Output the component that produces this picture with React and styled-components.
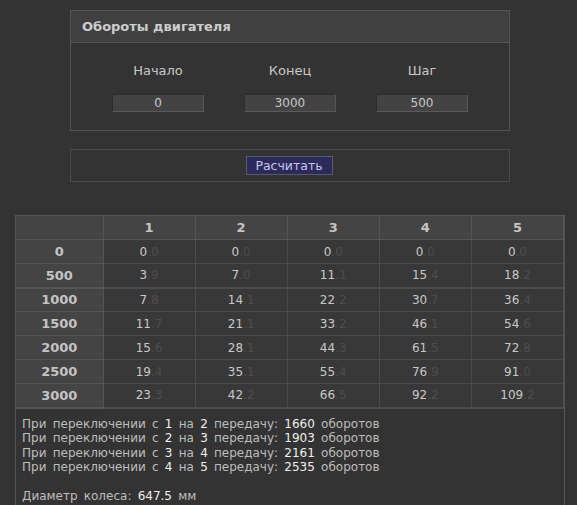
import React from "react";
import styled, { createGlobalStyle } from "styled-components";

const Global = createGlobalStyle`
  html, body { margin: 0; padding: 0; background: #333333; }
  body { font-family: "DejaVu Sans", Verdana, sans-serif; color: #c8c8c8; }
`;

const Page = styled.div`
  padding-top: 10px;
  min-height: 505px;
  box-sizing: border-box;
`;

const Panel = styled.div`
  margin-left: 70px;
  width: 440px;
  border: 1px solid #555;
  box-sizing: border-box;
`;

const PanelHeader = styled.div`
  height: 31px;
  line-height: 31px;
  background: #404040;
  border-bottom: 1px solid #555;
  padding-left: 11px;
  font-weight: bold;
  font-size: 13px;
  color: #cdcdcd;
`;

const PanelBody = styled.div`
  display: grid;
  grid-template-columns: repeat(3, 132px);
  justify-content: center;
  padding: 20px 0 18px;
`;

const Field = styled.div`
  display: flex;
  flex-direction: column;
  align-items: center;
  gap: 15px;
`;

const Label = styled.div`
  font-size: 13px;
  line-height: 16px;
  color: #c8c8c8;
`;

const Input = styled.div`
  width: 92px;
  height: 18px;
  box-sizing: border-box;
  background: #434343;
  border: 1px solid #2c2c2c;
  border-bottom-color: #5a5a5a;
  border-right-color: #555;
  text-align: center;
  font-size: 12px;
  line-height: 16px;
  color: #c8c8c8;
`;

const ButtonPanel = styled.div`
  margin: 18px 0 0 70px;
  width: 440px;
  height: 33px;
  border: 1px solid #4a4a4a;
  box-sizing: border-box;
  display: flex;
  align-items: center;
  justify-content: center;
`;

const Button = styled.div`
  width: 87px;
  height: 19px;
  box-sizing: border-box;
  background: #2d2a5c;
  border: 1px solid #5a5a6a;
  color: #c9c6ee;
  font-size: 12.5px;
  line-height: 17px;
  text-align: center;
  margin-left: -2px;
`;

const Results = styled.div`
  margin: 33px 0 0 15px;
  width: 550px;
  border-left: 1px solid #555;
  border-right: 1px solid #555;
  box-sizing: border-box;
`;

const Table = styled.table`
  width: 100%;
  border-collapse: collapse;
  table-layout: fixed;
`;

const Th = styled.th`
  height: 24px;
  padding: 0;
  background: #444;
  border: 1px solid #555;
  border-left: ${(p) => (p.$first ? "none" : "1px solid #555")};
  font-size: 13px;
  font-weight: bold;
  color: #c4c4c4;
  text-align: center;
  box-sizing: border-box;
`;

const Td = styled.td`
  height: 24px;
  padding: 0;
  background: #383838;
  border: 1px solid #4a4a4a;
  border-bottom: ${(p) => (p.$thick ? "2px solid #4c4c4c" : "1px solid #4a4a4a")};
  font-size: 12px;
  color: #c8c8c8;
  text-align: center;
  box-sizing: border-box;
`;

const RowHead = styled(Th)`
  border-left: none;
  border-bottom: ${(p) => (p.$thick ? "2px solid #555" : "1px solid #555")};
`;

const Dim = styled.span`
  color: #4d4d4d;
`;

const Notes = styled.div`
  padding: 8px 6px 4px;
  font-size: 12px;
  line-height: 14.5px;
  word-spacing: 2.4px;
  color: #bdbdbd;
`;

const Hi = styled.span`
  color: #f0f0f0;
`;

const Spacer = styled.div`
  height: 14.5px;
`;

const starts = [0, 500, 1000, 1500, 2000, 2500, 3000];
const data = [
  ["0.0", "0.0", "0.0", "0.0", "0.0"],
  ["3.9", "7.0", "11.1", "15.4", "18.2"],
  ["7.8", "14.1", "22.2", "30.7", "36.4"],
  ["11.7", "21.1", "33.2", "46.1", "54.6"],
  ["15.6", "28.1", "44.3", "61.5", "72.8"],
  ["19.4", "35.1", "55.4", "76.9", "91.0"],
  ["23.3", "42.2", "66.5", "92.2", "109.2"],
];
const shifts = [
  [1, 2, 1660],
  [2, 3, 1903],
  [3, 4, 2161],
  [4, 5, 2535],
];

export default function App() {
  return (
    <Page>
      <Global />
      <Panel>
        <PanelHeader>Обороты двигателя</PanelHeader>
        <PanelBody>
          <Field>
            <Label>Начало</Label>
            <Input>0</Input>
          </Field>
          <Field>
            <Label>Конец</Label>
            <Input>3000</Input>
          </Field>
          <Field>
            <Label>Шаг</Label>
            <Input>500</Input>
          </Field>
        </PanelBody>
      </Panel>
      <ButtonPanel>
        <Button>Расчитать</Button>
      </ButtonPanel>
      <Results>
        <Table>
          <colgroup>
            <col style={{ width: 87 }} />
            <col />
            <col />
            <col />
            <col />
            <col />
          </colgroup>
          <thead>
            <tr>
              <Th $first></Th>
              {[1, 2, 3, 4, 5].map((g) => (
                <Th key={g}>{g}</Th>
              ))}
            </tr>
          </thead>
          <tbody>
            {data.map((row, i) => {
              const thick = i === 1 || i === 6;
              return (
                <tr key={i}>
                  <RowHead $thick={thick}>{starts[i]}</RowHead>
                  {row.map((v, j) => {
                    const [a, b] = v.split(".");
                    return (
                      <Td key={j} $thick={thick}>
                        {a}
                        <Dim>.{b}</Dim>
                      </Td>
                    );
                  })}
                </tr>
              );
            })}
          </tbody>
        </Table>
        <Notes>
          {shifts.map(([a, b, r]) => (
            <div key={a}>
              При переключении с <Hi>{a}</Hi> на <Hi>{b}</Hi> передачу:{" "}
              <Hi>{r}</Hi> оборотов
            </div>
          ))}
          <Spacer />
          <div>
            Диаметр колеса: <Hi>647.5</Hi> мм
          </div>
        </Notes>
      </Results>
    </Page>
  );
}
